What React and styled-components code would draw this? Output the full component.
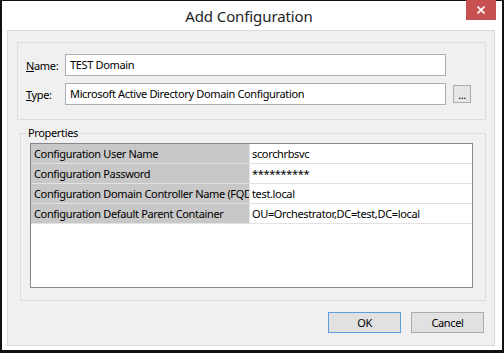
import React from "react";
import styled, { createGlobalStyle } from "styled-components";

const GlobalStyle = createGlobalStyle`
  html, body {
    margin: 0;
    padding: 0;
    background: #ffffff;
  }
  body {
    font-family: "Segoe UI", "Noto Sans", sans-serif;
    font-size: 11px;
    letter-spacing: -0.35px;
    color: #000;
  }
`;

const properties = [
  { name: "Configuration User Name", value: "scorchrbsvc" },
  { name: "Configuration Password", value: "**********" },
  { name: "Configuration Domain Controller Name (FQDN)", value: "test.local" },
  { name: "Configuration Default Parent Container", value: "OU=Orchestrator,DC=test,DC=local" },
];

const App = () => {
  return (
    <>
      <GlobalStyle />
      <Window>
        <TitleBar>
          <span />
          <Title>Add Configuration</Title>
          <CloseButton aria-label="Close">
            <svg width="8" height="8" viewBox="0 0 8 8">
              <path d="M0.5 0.5 L7.5 7.5 M7.5 0.5 L0.5 7.5" stroke="#fff" strokeWidth="1.6" />
            </svg>
          </CloseButton>
        </TitleBar>

        <Client>
          <FieldsGroup>
            <FieldLabel>
              <u>N</u>ame:
            </FieldLabel>
            <TextBox>TEST Domain</TextBox>
            <span />
            <FieldLabel>
              <u>T</u>ype:
            </FieldLabel>
            <TextBox>Microsoft Active Directory Domain Configuration</TextBox>
            <BrowseButton>...</BrowseButton>
          </FieldsGroup>

          <PropsFieldset>
            <Legend>Properties</Legend>
            <PropGrid>
              {properties.map((p) => (
                <PropRow key={p.name}>
                  <PropName>{p.name}</PropName>
                  <PropValue>{p.value}</PropValue>
                </PropRow>
              ))}
            </PropGrid>
          </PropsFieldset>

          <ButtonRow>
            <DialogButton $primary>OK</DialogButton>
            <DialogButton>Cancel</DialogButton>
          </ButtonRow>
        </Client>
      </Window>
    </>
  );
};

const Window = styled.div`
  width: 504px;
  height: 353px;
  box-sizing: border-box;
  border-style: solid;
  border-color: #111;
  border-width: 1px 2px 3px 2px;
  background: #fff;
  display: flex;
  flex-direction: column;
  padding-bottom: 4px;
`;

const TitleBar = styled.div`
  height: 29px;
  display: grid;
  grid-template-columns: 1fr auto 1fr;
  padding-right: 6px;
`;

const Title = styled.div`
  font-size: 15px;
  letter-spacing: -0.1px;
  line-height: 29px;
  color: #1e1e1e;
  padding-top: 1px;
`;

const CloseButton = styled.div`
  justify-self: end;
  align-self: start;
  width: 30px;
  height: 20px;
  margin-top: -1px;
  background: #c75050;
  display: flex;
  align-items: center;
  justify-content: center;
`;

const Client = styled.div`
  margin: 0 7px 0 5px;
  flex: 1;
  border: 1px solid #d9d9d9;
  background: #f0f0f0;
  padding: 11px 8px 12px 9px;
  display: flex;
  flex-direction: column;
`;

const FieldsGroup = styled.div`
  height: 78px;
  box-sizing: border-box;
  border: 1px solid #dcdcdc;
  padding: 11px 14px 14px 8px;
  display: grid;
  grid-template-columns: 39px 1fr 25px;
  grid-auto-rows: 22px;
  row-gap: 7px;
  align-items: center;
`;

const FieldLabel = styled.label`
  color: #000;
`;

const TextBox = styled.div`
  height: 22px;
  box-sizing: border-box;
  border: 1px solid #abadb3;
  background: #fff;
  padding: 0 4px;
  line-height: 20px;
  white-space: nowrap;
  overflow: hidden;
`;

const BrowseButton = styled.div`
  justify-self: end;
  width: 18px;
  height: 18px;
  box-sizing: border-box;
  border: 1px solid #adadad;
  background: #e6e6e6;
  font-size: 11px;
  line-height: 17px;
  text-align: center;
  letter-spacing: -0.5px;
`;

const PropsFieldset = styled.fieldset`
  margin: 5px 0 0 3px;
  min-width: 0;
  border: 1px solid #dcdcdc;
  padding: 2px 12px 12px 9px;
`;

const Legend = styled.legend`
  margin-left: -3px;
  padding: 0 1px;
  line-height: 16px;
`;

const PropGrid = styled.div`
  height: 145px;
  box-sizing: border-box;
  border: 1px solid #828790;
  background: #fff;
  display: flex;
  flex-direction: column;
`;

const PropRow = styled.div`
  height: 20px;
  box-sizing: border-box;
  display: grid;
  grid-template-columns: 219px 1fr;
  border-bottom: 1px solid #e2e2e2;
`;

const PropName = styled.div`
  background: #c8c8c8;
  border-right: 1px solid #e2e2e2;
  padding-left: 3px;
  line-height: 19px;
  white-space: nowrap;
  overflow: hidden;
`;

const PropValue = styled.div`
  padding-left: 2px;
  line-height: 19px;
  white-space: nowrap;
  overflow: hidden;
`;

const ButtonRow = styled.div`
  margin-top: 11px;
  padding-right: 2px;
  display: flex;
  justify-content: flex-end;
  gap: 10px;
`;

const DialogButton = styled.div`
  width: 73px;
  height: 21px;
  box-sizing: border-box;
  border: 1px solid ${(p) => (p.$primary ? "#5b9ee0" : "#acacac")};
  background: #e1e1e1;
  text-align: center;
  line-height: 19px;
`;

export default App;
